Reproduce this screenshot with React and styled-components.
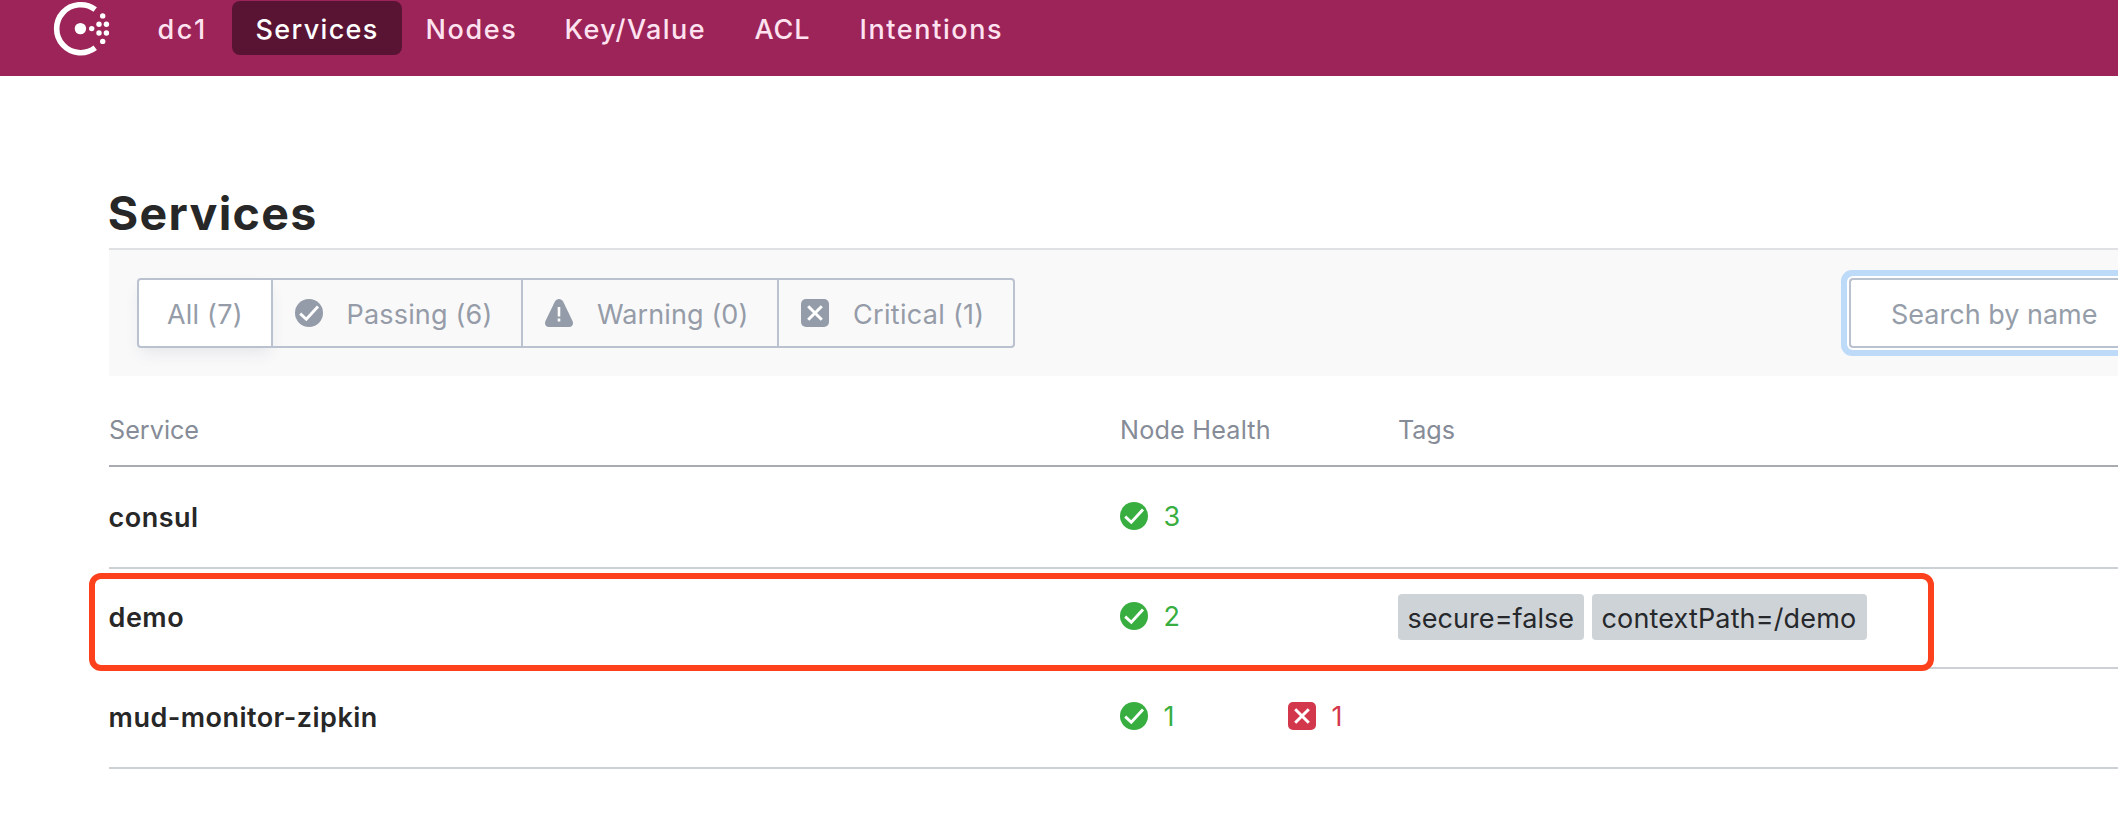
import React from "react";
import styled, { createGlobalStyle } from "styled-components";

const GlobalStyle = createGlobalStyle`
  *, *::before, *::after { box-sizing: border-box; }
  html, body { margin: 0; overflow: hidden; }
  body {
    background: #fff;
    color: #272728;
    font-family: Inter, "Liberation Sans", sans-serif;
    font-size: 27px;
  }
`;

const Page = styled.div`
  height: 840px;
  overflow: hidden;
`;

const Header = styled.header`
  display: flex;
  height: 76px;
  padding: 1px 0 0 52px;
  background: #9c2458;
`;

const Logo = styled.svg`
  flex: none;
  width: 60px;
  height: 56px;
  margin-right: 22px;
`;

const Nav = styled.nav`
  display: flex;
  height: 54px;
`;

const NavItem = styled.a`
  width: ${(p) => p.$width}px;
  height: 54px;
  padding: 3px 0 0 23.5px;
  border-radius: 8px;
  line-height: 52px;
  font-weight: 500;
  white-space: nowrap;
  letter-spacing: ${(p) => p.$spacing}px;
  color: ${(p) => (p.$active ? "#fff" : "#ffe2f0")};
  background: ${(p) => (p.$active ? "#591434" : "transparent")};
`;

const Main = styled.main`
  padding-left: 109px;
`;

const Title = styled.h1`
  height: 172px;
  margin: 0;
  padding: 109px 0 0;
  font-size: 46.5px;
  line-height: 56px;
  font-weight: 700;
  letter-spacing: 1.3px;
  text-indent: -1.2px;
`;

const Toolbar = styled.div`
  display: flex;
  justify-content: space-between;
  height: 128px;
  padding: 28px 0 0 28px;
  border-top: 2px solid #dfe1e5;
  background: #f9f9fa;
  overflow: hidden;
`;

const FilterGroup = styled.div`
  display: flex;
  height: 70px;
`;

const Filter = styled.label`
  display: flex;
  align-items: center;
  position: relative;
  width: ${(p) => p.$width}px;
  height: 70px;
  margin-right: -2px;
  padding-left: ${(p) => (p.$active ? 28 : 22)}px;
  border: 2px solid #bac1cf;
  color: #959ca8;
  background: ${(p) => (p.$active ? "#fff" : "transparent")};
  box-shadow: ${(p) => (p.$active ? "0 8px 16px -4px rgba(40, 45, 60, 0.1)" : "none")};
  &:first-child { border-radius: 4px 0 0 4px; }
  &:last-child { border-radius: 0 4px 4px 0; }
`;

const FilterText = styled.span`
  margin-left: ${(p) => p.$gap || 0}px;
  padding-top: 2px;
  white-space: nowrap;
  letter-spacing: ${(p) => p.$spacing}px;
`;

const Icon = styled.svg`
  flex: none;
  display: block;
  width: 28px;
  height: 28px;
  margin-bottom: ${(p) => p.$lift || 0}px;
`;

const Search = styled.div`
  width: 269px;
  height: 70px;
  padding: 2px 0 0 40px;
  border: 2px solid #bac1cf;
  border-right: 0;
  border-radius: 4px 0 0 4px;
  line-height: 66px;
  white-space: nowrap;
  color: #959da9;
  background: #fff;
  box-shadow: 0 0 0 2px #fff, 0 0 0 8px #bddaf9;
`;

const columns = "1011px 278px 1fr";

const TableHead = styled.div`
  display: grid;
  grid-template-columns: ${columns};
  height: 91px;
  padding-top: 19px;
  border-bottom: 2px solid #a8acb1;
  font-size: 25.2px;
  line-height: 70px;
  color: #868c97;
`;

const HeadCell = styled.span`
  letter-spacing: ${(p) => p.$spacing}px;
`;

const Row = styled.div`
  display: grid;
  grid-template-columns: ${columns};
  grid-template-rows: 96px;
  position: relative;
  height: 100px;
  padding-bottom: 2px;
  border-bottom: 2px solid #cdd0d5;
  &:nth-child(2) {
    height: 102px;
    padding-top: 2px;
  }
`;

const Name = styled.a`
  padding-top: 1px;
  line-height: 95px;
  font-weight: 600;
  letter-spacing: 0.47px;
  text-indent: -0.4px;
`;

const Health = styled.div`
  display: flex;
  height: 94px;
`;

const Count = styled.span`
  display: flex;
  flex: none;
  align-items: center;
  width: 168px;
  gap: 15.5px;
  color: ${(p) => p.$color};
`;

const Tags = styled.div`
  display: flex;
  align-items: center;
  gap: 8px;
`;

const Tag = styled.span`
  width: ${(p) => p.$width}px;
  height: 46px;
  padding: 3px 0 0 9.5px;
  border-radius: 4px;
  line-height: 43px;
  white-space: nowrap;
  letter-spacing: ${(p) => p.$spacing}px;
  color: #26282c;
  background: #ced3d7;
`;

const Highlight = styled.div`
  position: absolute;
  z-index: 1;
  left: -20px;
  top: 4px;
  width: 1845px;
  height: 98px;
  border: 6px solid #fd411c;
  border-radius: 12px;
`;

const ConsulLogo = () => (
  <Logo viewBox="52 1 60 56" fill="#fff">
    <path d="M95.2 9.6A24 24 0 1 0 95.2 47.8" fill="none" stroke="#fff" strokeWidth="5.6" />
    <circle cx="80.4" cy="28.6" r="5.7" />
    <circle cx="91.7" cy="28.6" r="2.7" />
    <circle cx="99" cy="24.3" r="2.7" />
    <circle cx="106.4" cy="24.3" r="2.7" />
    <circle cx="99" cy="33" r="2.7" />
    <circle cx="106.4" cy="33" r="2.7" />
    <circle cx="102.7" cy="15.9" r="2.7" />
    <circle cx="102.7" cy="41.4" r="2.7" />
  </Logo>
);

const PassingIcon = ({ color, lift }) => (
  <Icon viewBox="0 0 28 28" $lift={lift}>
    <circle cx="14" cy="14" r="14" fill={color} />
    <path d="M5.2 14.6L11.3 20.2L23 7.4" fill="none" stroke="#fff" strokeWidth="2.9" />
  </Icon>
);

const WarningIcon = ({ color, lift }) => (
  <Icon viewBox="0 0 28 28" $lift={lift}>
    <path
      d="M9.9 2.6C11.6 -0.8 16.4 -0.8 18.1 2.6L27.3 21.6C28.9 25 27.4 28 24 28H4C0.6 28 -0.9 25 0.7 21.6Z"
      fill={color}
    />
    <path d="M12.7 8H15.3V17.4H12.7ZM12.7 19.4H15.3V22.6H12.7Z" fill="#fff" />
  </Icon>
);

const CriticalIcon = ({ color, lift }) => (
  <Icon viewBox="0 0 28 28" $lift={lift}>
    <rect width="28" height="28" rx="5" fill={color} />
    <path d="M7.2 7.2L20.8 20.8M20.8 7.2L7.2 20.8" fill="none" stroke="#fff" strokeWidth="3" />
  </Icon>
);

const navItems = [
  { label: "dc1", width: 98, spacing: 2.6 },
  { label: "Services", width: 170, spacing: 1.34, active: true },
  { label: "Nodes", width: 139, spacing: 1.6 },
  { label: "Key/Value", width: 190, spacing: 1.4 },
  { label: "ACL", width: 105, spacing: 0.9 },
  { label: "Intentions", width: 190, spacing: 1.6 },
];

const services = [
  { name: "consul", passing: 3 },
  {
    name: "demo",
    passing: 2,
    highlighted: true,
    tags: [
      { label: "secure=false", width: 186, spacing: 0.05 },
      { label: "contextPath=/demo", width: 275, spacing: 0.15 },
    ],
  },
  { name: "mud-monitor-zipkin", passing: 1, critical: 1 },
];

const GREY = "#939ca8";
const GREEN = "#38ae40";
const RED = "#d3374b";

export default function App() {
  return (
    <Page>
      <GlobalStyle />
      <Header>
        <ConsulLogo />
        <Nav>
          {navItems.map((n) => (
            <NavItem key={n.label} $width={n.width} $spacing={n.spacing} $active={n.active}>
              {n.label}
            </NavItem>
          ))}
        </Nav>
      </Header>
      <Main>
        <Title>Services</Title>
        <Toolbar>
          <FilterGroup>
            <Filter $width={136} $active>
              <FilterText $spacing={0.2}>All (7)</FilterText>
            </Filter>
            <Filter $width={252}>
              <PassingIcon color={GREY} lift={1} />
              <FilterText $gap={23.5} $spacing={0.18}>Passing (6)</FilterText>
            </Filter>
            <Filter $width={258}>
              <WarningIcon color={GREY} lift={1} />
              <FilterText $gap={24} $spacing={0.1}>Warning (0)</FilterText>
            </Filter>
            <Filter $width={238}>
              <CriticalIcon color={GREY} lift={1} />
              <FilterText $gap={24} $spacing={0.3}>Critical (1)</FilterText>
            </Filter>
          </FilterGroup>
          <Search>Search by name</Search>
        </Toolbar>
        <div>
          <TableHead>
            <HeadCell>Service</HeadCell>
            <HeadCell $spacing={0.2}>Node Health</HeadCell>
            <HeadCell $spacing={-0.1}>Tags</HeadCell>
          </TableHead>
          {services.map((s) => (
            <Row key={s.name}>
              <Name>{s.name}</Name>
              <Health>
                <Count $color={GREEN}>
                  <PassingIcon color={GREEN} />
                  {s.passing}
                </Count>
                {s.critical && (
                  <Count $color={RED}>
                    <CriticalIcon color={RED} />
                    {s.critical}
                  </Count>
                )}
              </Health>
              <Tags>
                {(s.tags || []).map((t) => (
                  <Tag key={t.label} $width={t.width} $spacing={t.spacing}>
                    {t.label}
                  </Tag>
                ))}
              </Tags>
              {s.highlighted && <Highlight />}
            </Row>
          ))}
        </div>
      </Main>
    </Page>
  );
}
